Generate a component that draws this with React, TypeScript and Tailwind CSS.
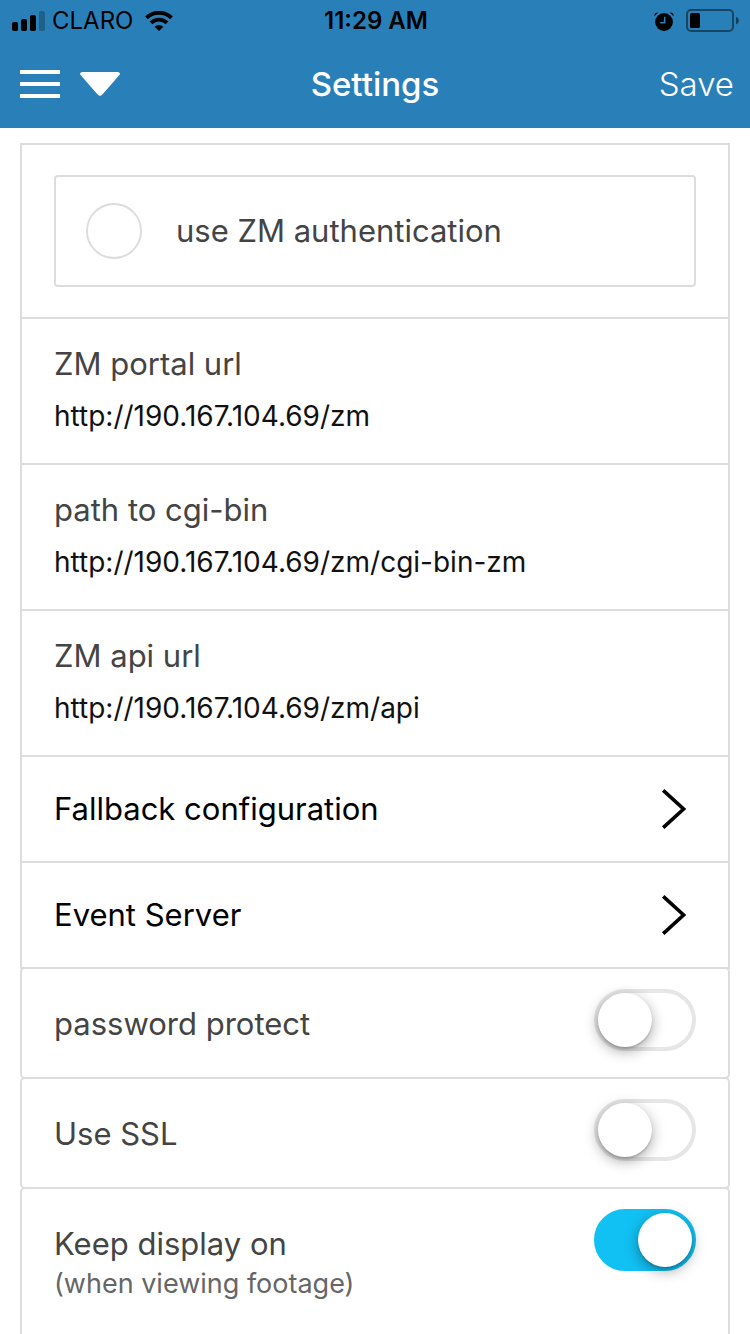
import { useState } from "react";
import type { ReactNode } from "react";

const item = "-mt-[2px] border-2 border-[#dddddd] bg-white px-8 first:mt-0";
const switchItem = `${item} flex items-start justify-between rounded-[5px]`;

function SignalIcon() {
  return (
    <svg width="34" height="20" viewBox="0 0 34 20" aria-hidden="true">
      <rect x="0" y="11" width="6" height="9" rx="1.8" />
      <rect x="9" y="8" width="6" height="12" rx="1.8" />
      <rect x="18" y="4" width="6" height="16" rx="1.8" />
      <rect x="27" y="0" width="6" height="20" rx="1.8" opacity="0.25" />
    </svg>
  );
}

function WifiIcon() {
  return (
    <svg width="28" height="20" viewBox="0 0 28 20" fill="none" stroke="#000" strokeWidth="3.9" aria-hidden="true">
      <path d="M1.5 6.8 A18.2 18.2 0 0 1 26.5 6.8" />
      <path d="M6 11.9 A11.3 11.3 0 0 1 22 11.9" />
      <path d="M14 20 L9.6 15.8 A6.2 6.2 0 0 1 18.4 15.8 Z" fill="#000" stroke="none" />
    </svg>
  );
}

function AlarmIcon() {
  return (
    <svg width="20" height="19" viewBox="0 0 20 19" aria-hidden="true">
      <circle cx="10" cy="10" r="8.9" />
      <path d="M0.5 4.2 Q0 0.4 4.2 0.6 Z M19.5 4.2 Q20 0.4 15.8 0.6 Z" />
      <path d="M10.7 4.8 V10.8 H6.2" fill="none" stroke="#2980b9" strokeWidth="1.5" />
    </svg>
  );
}

function BatteryIcon() {
  return (
    <svg width="54" height="24" viewBox="0 0 54 24" aria-hidden="true">
      <rect x="1" y="1" width="46" height="21" rx="4" fill="none" stroke="#000" strokeWidth="2" opacity="0.45" />
      <rect x="4" y="4" width="10" height="15" rx="1.5" />
      <path d="M50 7.5 Q53 9 53 11.5 Q53 14 50 15.5 Z" opacity="0.5" />
    </svg>
  );
}

function UrlField({ id, label, value }: { id: string; label: string; value: string }) {
  return (
    <div className={`${item} flex flex-col gap-3 pt-[25px] pb-[27px]`}>
      <label htmlFor={id} className="text-[31px] leading-10 text-[#444444]">
        {label}
      </label>
      <input
        id={id}
        type="text"
        defaultValue={value}
        className="h-10 w-full bg-transparent p-0 text-[28px] leading-10 text-[#111111] outline-none"
      />
    </div>
  );
}

function LinkItem({ children }: { children: ReactNode }) {
  return (
    <a href="#" className={`${item} flex items-center justify-between py-8 pr-10 text-[31px] leading-10 text-black`}>
      {children}
      <svg width="26" height="40" viewBox="0 0 26 40" fill="none" stroke="#000" strokeWidth="3.6" aria-hidden="true">
        <path d="M1.2 1.4 L21.6 20 L1.2 38.6" />
      </svg>
    </a>
  );
}

function Switch({ id, on = false }: { id: string; on?: boolean }) {
  const [checked, setChecked] = useState(on);
  return (
    <input
      id={id}
      type="checkbox"
      role="switch"
      checked={checked}
      onChange={() => setChecked(!checked)}
      className="mt-5 flex h-[62px] w-[102px] shrink-0 cursor-pointer appearance-none rounded-full border-4 border-[#e6e6e6] bg-white before:size-[54px] before:rounded-full before:bg-white before:shadow-[0_4px_14px_rgba(0,0,0,0.35),0_2px_2px_rgba(0,0,0,0.15)] before:content-[''] checked:justify-end checked:border-[#11c1f3] checked:bg-[#11c1f3]"
    />
  );
}

export default function App() {
  return (
    <div className="flex min-h-screen flex-col bg-white font-['Inter','Liberation_Sans',sans-serif]">
      <header className="bg-[#2980b9]">
        <div className="grid h-10 grid-cols-[1fr_auto_1fr] items-center pt-[2px] pr-[10px] pl-3 text-[24px] leading-8 text-black">
          <div className="flex items-center">
            <SignalIcon />
            <span className="ml-[6px]">CLARO</span>
            <span className="ml-3">
              <WifiIcon />
            </span>
          </div>
          <span className="font-semibold">11:29 AM</span>
          <div className="flex items-center justify-end gap-3">
            <AlarmIcon />
            <BatteryIcon />
          </div>
        </div>
        <div className="grid h-[88px] grid-cols-[1fr_auto_1fr] items-center px-4 text-[33px] leading-10 text-white">
          <div className="flex items-center gap-5 pl-1">
            <button type="button" aria-label="Menu">
              <svg className="block" width="40" height="28" viewBox="0 0 40 28" fill="#fff" aria-hidden="true">
                <path d="M0 0H40V4H0Z M0 12H40V16H0Z M0 24H40V28H0Z" />
              </svg>
            </button>
            <button type="button" aria-label="Show options">
              <svg className="block" width="40" height="24" viewBox="0 0 40 24" fill="#fff" aria-hidden="true">
                <path d="M2 0H38Q41 .8 39.4 3L22.4 22.6Q20 25 17.6 22.6L.6 3Q-1 .8 2 0Z" />
              </svg>
            </button>
          </div>
          <h1 className="font-medium">Settings</h1>
          <button type="button" className="justify-self-end font-light">
            Save
          </button>
        </div>
      </header>

      <main className="flex flex-1 flex-col px-5 pt-[15px]">
        <div className={`${item} py-[30px]`}>
          <label
            htmlFor="auth"
            className="flex h-28 items-center gap-[34px] rounded-[4px] border-2 border-[#dddddd] px-[30px] text-[31px] leading-10 text-[#444444]"
          >
            <input
              id="auth"
              type="checkbox"
              className="size-14 shrink-0 appearance-none rounded-full border-2 border-[#dddddd] bg-white checked:bg-[#2980b9]"
            />
            use ZM authentication
          </label>
        </div>
        <UrlField id="portal" label="ZM portal url" value="http://190.167.104.69/zm" />
        <UrlField id="cgi" label="path to cgi-bin" value="http://190.167.104.69/zm/cgi-bin-zm" />
        <UrlField id="api" label="ZM api url" value="http://190.167.104.69/zm/api" />
        <LinkItem>Fallback configuration</LinkItem>
        <LinkItem>Event Server</LinkItem>
        <div className={`${switchItem} pb-[26px]`}>
          <label htmlFor="password" className="mt-[35px] text-[31px] leading-10 text-[#444444]">
            password protect
          </label>
          <Switch id="password" />
        </div>
        <div className={`${switchItem} pb-[26px]`}>
          <label htmlFor="ssl" className="mt-[35px] text-[31px] leading-10 text-[#444444]">
            Use SSL
          </label>
          <Switch id="ssl" />
        </div>
        <div className={`${switchItem} flex-1 rounded-b-none border-b-0 pb-[26px]`}>
          <label htmlFor="display" className="mt-[35px] text-[31px] leading-10 text-[#444444]">
            Keep display on
            <small className="block text-[27px] leading-10 text-[#666666]">(when viewing footage)</small>
          </label>
          <Switch id="display" on />
        </div>
      </main>
    </div>
  );
}
